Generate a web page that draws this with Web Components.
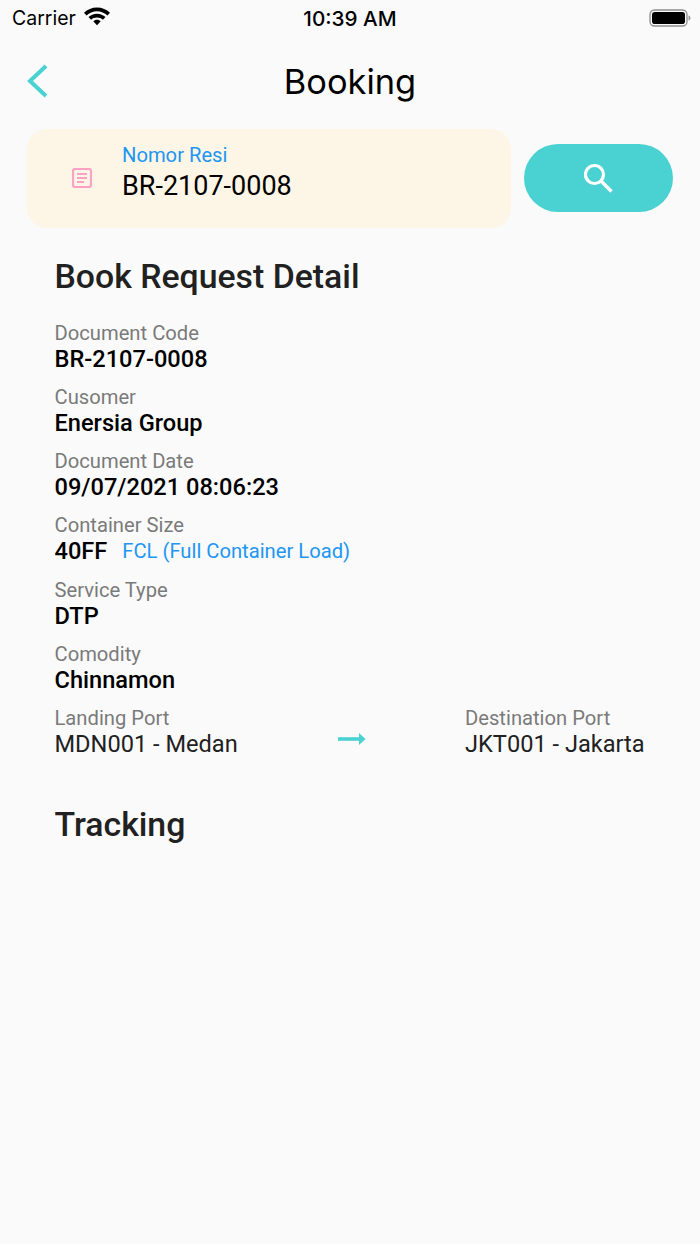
<!DOCTYPE html>
<html><head><meta charset="utf-8">
<style>
html,body{margin:0;padding:0;background:#fafafa}
body{width:700px;height:1244px;overflow:hidden;font-family:Roboto,sans-serif}
</style></head><body>
<app-screen>
<status-bar></status-bar>
<nav-header>Booking</nav-header>
<search-row label="Nomor Resi" value="BR-2107-0008"></search-row>
<section-title style="margin-top:29px">Book Request Detail</section-title>
<detail-list>
<detail-item label="Document Code">BR-2107-0008</detail-item>
<detail-item label="Cusomer">Enersia Group</detail-item>
<detail-item label="Document Date">09/07/2021 08:06:23</detail-item>
<detail-item label="Container Size">40FF<span slot="extra">FCL (Full Container Load)</span></detail-item>
<detail-item label="Service Type">DTP</detail-item>
<detail-item label="Comodity">Chinnamon</detail-item>
<port-route from-label="Landing Port" from="MDN001 - Medan" to-label="Destination Port" to="JKT001 - Jakarta"></port-route>
</detail-list>
<section-title style="margin-top:46px">Tracking</section-title>
</app-screen>
<script>
function def(name,html,init){
  customElements.define(name,class extends HTMLElement{
    constructor(){super();const r=this.attachShadow({mode:'open'});r.innerHTML=html;}
    connectedCallback(){if(init)init(this,this.shadowRoot);}
  });
}
def('app-screen',`<style>:host{display:block;width:700px;height:1244px;background:#fafafa;color:#000}</style><slot></slot>`);
def('status-bar',`<style>
:host{display:grid;grid-template-columns:1fr auto 1fr;align-items:center;height:36px;padding:0 9px 0 12px;box-sizing:border-box;font-family:Inter,sans-serif;color:#000}
.l{display:flex;align-items:center;gap:7px;font-size:19.500px}
.t{font-size:20.700px;font-weight:500;margin-left:-3px}
.r{display:flex;justify-content:flex-end}
svg{display:block}
</style>
<div class="l"><span>Carrier</span>
<svg width="28" height="20" viewBox="0 0 28 20" style="margin-top:-4px"><path d="M14 1.500c5 0 9.700 2 13 5.300L24.400 9.500C21.700 6.800 18 5.200 14 5.200S6.300 6.800 3.600 9.500L1 6.800C4.300 3.500 9 1.500 14 1.500z"/><path d="M14 7.700c3.300 0 6.300 1.300 8.500 3.400l-2.600 2.700c-1.500-1.400-3.600-2.300-5.900-2.300s-4.400.9-5.900 2.300l-2.600-2.700c2.200-2.100 5.200-3.400 8.500-3.400z"/><path d="M14 13.800c1.500 0 2.800.6 3.700 1.500L14 19.200l-3.700-3.900c.9-.9 2.200-1.500 3.700-1.500z"/></svg></div>
<div class="t">10:39 AM</div>
<div class="r"><svg width="42" height="20" viewBox="0 0 42 20"><rect x="1" y="2" width="37" height="16" rx="4.500" fill="none" stroke="#8e8e8e" stroke-width="1.300"/><rect x="3" y="4" width="33" height="12" rx="2.800" fill="#000"/><path d="M39.500 7.500c1.300.3 2 1.300 2 2.500s-.7 2.200-2 2.500z" fill="#9a9a9a"/></svg></div>`);
def('nav-header',`<style>
:host{display:block;position:relative;height:90px;font-family:Inter,sans-serif}
.bar{display:flex;align-items:center;height:90px;padding:0 0 0 27px;box-sizing:border-box}
.title{position:absolute;left:0;right:0;top:0;height:90px;display:flex;align-items:center;justify-content:center;font-size:34.400px;font-weight:400;color:#000}
svg{display:block}
</style>
<div class="bar"><svg width="21" height="34" viewBox="0 0 21 34"><path d="M19 2 3 17l16 15" fill="none" stroke="#4ad1d2" stroke-width="4"/></svg></div>
<div class="title"><slot></slot></div>`);
def('search-row',`<style>
:host{display:flex;align-items:center;gap:13px;padding:3px 27px 0;box-sizing:border-box;width:700px}
.field{width:484px;height:99px;background:#fdf5e6;border-radius:20px;display:flex;align-items:center;box-sizing:border-box}
.ic{width:95px;display:flex;justify-content:center;flex:none;padding:0 0 2px 14px;box-sizing:border-box}
.tx{display:flex;flex-direction:column;margin-top:-8px}
.lb{color:#2196f3;font-size:20.200px;line-height:24px;margin-top:-1px}
.v{font-size:27px;line-height:38px;color:#000}
button{all:unset;width:149px;height:68px;border-radius:34px;background:#4ad1d2;display:flex;align-items:center;justify-content:center;margin-top:-1px}
svg{display:block}
</style>
<div class="field"><div class="ic"><svg width="20" height="20" viewBox="0 0 20 20"><rect x="1" y="1" width="18" height="18" rx="2" fill="none" stroke="#ffa0c5" stroke-width="2.200"/><path d="M5 6h10M5 10h10M5 14h7" stroke="#ffa0c5" stroke-width="2" fill="none"/></svg></div>
<div class="tx"><span class="lb"></span><span class="v"></span></div></div>
<button aria-label="search"><svg width="30" height="30" viewBox="0 0 30 30" style="margin-left:-2px"><circle cx="11.500" cy="11.500" r="9" fill="none" stroke="#fff" stroke-width="3.200"/><path d="M18 18 28.500 28.500" stroke="#fff" stroke-width="3.400" fill="none"/></svg></button>`,
(h,r)=>{r.querySelector('.lb').textContent=h.getAttribute('label');r.querySelector('.v').textContent=h.getAttribute('value');});
def('section-title',`<style>:host{display:block;padding-left:54.500px;font-size:33.800px;line-height:40px;font-weight:500;color:#212121}</style><slot></slot>`);
def('detail-list',`<style>:host{display:flex;flex-direction:column;gap:12.250px;padding:24px 55px 0 54.500px}</style><slot></slot>`);
def('detail-item',`<style>
:host{display:block;height:52px}
.lb{font-size:20.200px;line-height:24px;color:#7a7a7a;display:block;margin:-.3px 0 .3px}
.row{display:flex;align-items:center;height:27px;gap:15px}
.v{font-size:23.600px;font-weight:500;color:#000}
::slotted([slot=extra]){color:#2196f3;font-size:20.200px;font-weight:400}
</style><span class="lb"></span><div class="row"><span class="v"><slot></slot></span><slot name="extra"></slot></div>`,
(h,r)=>{r.querySelector('.lb').textContent=h.getAttribute('label');});
def('port-route',`<style>
:host{display:grid;grid-template-columns:283.500px 127px 1fr;height:52px;white-space:nowrap}
.lb{font-size:20.200px;line-height:24px;color:#7a7a7a;display:block;margin:-.3px 0 .3px}
.v{font-size:23.600px;line-height:27px;color:#212121;display:block}
.ar{display:flex;justify-content:flex-start;padding-top:24px}
svg{display:block}
</style>
<div class="col"><span class="lb a"></span><span class="v b"></span></div>
<div class="ar"><svg width="28" height="16" viewBox="0 0 28 16"><path d="M0 8h24" stroke="#4ad1d2" stroke-width="3.600"/><path d="M21 2 27.500 8 21 14z" fill="#4ad1d2"/></svg></div>
<div class="col"><span class="lb c"></span><span class="v d"></span></div>`,
(h,r)=>{r.querySelector('.a').textContent=h.getAttribute('from-label');r.querySelector('.b').textContent=h.getAttribute('from');r.querySelector('.c').textContent=h.getAttribute('to-label');r.querySelector('.d').textContent=h.getAttribute('to');});
</script>
</body></html>
